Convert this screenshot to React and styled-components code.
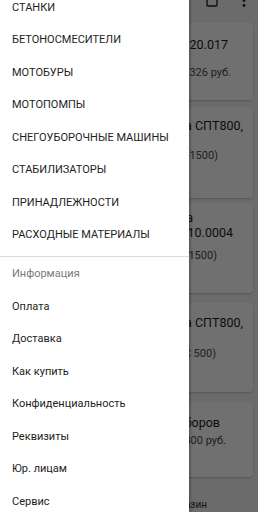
import styled, { createGlobalStyle } from "styled-components";

const Global = createGlobalStyle`
  html, body { margin: 0; padding: 0; }
  body { font-family: Roboto, "Noto Sans", sans-serif; }
`;

const catalog = [
  "СТАНКИ",
  "БЕТОНОСМЕСИТЕЛИ",
  "МОТОБУРЫ",
  "МОТОПОМПЫ",
  "СНЕГОУБОРОЧНЫЕ МАШИНЫ",
  "СТАБИЛИЗАТОРЫ",
  "ПРИНАДЛЕЖНОСТИ",
  "РАСХОДНЫЕ МАТЕРИАЛЫ",
];

const info = [
  "Оплата",
  "Доставка",
  "Как купить",
  "Конфиденциальность",
  "Реквизиты",
  "Юр. лицам",
  "Сервис",
];

// product cards behind the drawer (only their right ends show)
const cards = [
  { top: 6, height: 78, lines: [
    { text: "120.017", pr: 25, big: true, mt: 14.5 },
    { text: "14 326 руб.", pr: 22, mt: 14 },
  ] },
  { top: 7, height: 91, lines: [
    { text: "на СПТ800,", pr: 10, big: true, mt: 10.5 },
    { text: "(МЭС-1500)", pr: 35, mt: 16 },
  ] },
  { top: 5, height: 90, lines: [
    { text: "на", pr: 60, big: true, mt: 7 },
    { text: "10.0004", pr: 20, big: true, mt: 0 },
    { text: "(МЭС-1500)", pr: 36, mt: 8.5 },
  ] },
  { top: 9, height: 90, lines: [
    { text: "на СПТ800,", pr: 10, big: true, mt: 12.5 },
    { text: "(МЭС 500)", pr: 37, mt: 17 },
  ] },
  { top: 10, height: 75, lines: [
    { text: "приборов", pr: 33, big: true, mt: 12.5 },
    { text: "2 800 руб.", pr: 27, mt: 4 },
  ] },
];

export default function App() {
  return (
    <>
      <Global />
      <Screen>
        <AppArea>
          <TopBar>
            <svg width="12" height="8" viewBox="0 0 12 8">
              <rect x="1" y="-3" width="10" height="9" rx="1.2" fill="none" stroke="#222" strokeWidth="1.4" />
            </svg>
            <svg width="4" height="8" viewBox="0 0 4 8" style={{ marginLeft: 24 }}>
              <circle cx="2" cy="0.5" r="1.4" fill="#222" />
              <circle cx="2" cy="5.5" r="1.4" fill="#222" />
            </svg>
          </TopBar>
          {cards.map((c, i) => (
            <Card key={i} $top={c.top} $height={c.height}>
              {c.lines.map((l, j) => (
                <CardLine key={j} $pr={l.pr} $big={l.big} $mt={l.mt}>
                  {l.text}
                </CardLine>
              ))}
            </Card>
          ))}
          <BottomLabel>Магазин</BottomLabel>
        </AppArea>
        <Scrim />
        <Drawer>
          <Menu $first>
            {catalog.map((t) => (
              <Item key={t}>{t}</Item>
            ))}
          </Menu>
          <Divider />
          <SectionTitle>Информация</SectionTitle>
          <Menu>
            {info.map((t) => (
              <Item key={t}>{t}</Item>
            ))}
          </Menu>
        </Drawer>
      </Screen>
    </>
  );
}

const Screen = styled.div`
  position: relative;
  width: 258px;
  height: 512px;
  overflow: hidden;
  background: #f4f4f4;
`;

const AppArea = styled.div`
  display: flex;
  flex-direction: column;
  padding: 0 5px 0 8px;
`;

const TopBar = styled.div`
  height: 16px;
  flex-shrink: 0;
  display: flex;
  justify-content: flex-end;
  align-items: flex-start;
  padding-right: 7px;
`;

const Card = styled.div`
  margin-top: ${(p) => p.$top}px;
  height: ${(p) => p.$height}px;
  flex-shrink: 0;
  box-sizing: border-box;
  background: #fff;
  border-radius: 4px;
  box-shadow: 0 1px 2px rgba(0, 0, 0, 0.2);
  display: flex;
  flex-direction: column;
`;

const CardLine = styled.div`
  margin-top: ${(p) => p.$mt}px;
  padding-right: ${(p) => p.$pr}px;
  text-align: right;
  white-space: nowrap;
  font-size: ${(p) => (p.$big ? "12.5px" : "11px")};
  line-height: ${(p) => (p.$big ? "15px" : "13px")};
  color: ${(p) => (p.$big ? "#1c1c1c" : "#4a4a4a")};
`;

const BottomLabel = styled.div`
  margin-top: 22px;
  padding-right: 46px;
  text-align: right;
  font-size: 10px;
  line-height: 12px;
  color: #333;
`;

const Scrim = styled.div`
  position: absolute;
  inset: 0;
  background: rgba(0, 0, 0, 0.56);
`;

const Drawer = styled.div`
  position: absolute;
  top: 0;
  left: 0;
  bottom: 0;
  width: 189px;
  overflow: hidden;
  background: #fff;
  box-shadow: 1px 0 3px rgba(0, 0, 0, 0.35);
  display: flex;
  flex-direction: column;
`;

const Menu = styled.div`
  display: flex;
  flex-direction: column;
  flex-shrink: 0;
  margin-top: ${(p) => (p.$first ? "-9px" : "0")};
`;

const Item = styled.div`
  height: 32.5px;
  flex-shrink: 0;
  display: flex;
  align-items: center;
  padding-left: 12px;
  font-size: 11px;
  color: #1e1e1e;
  white-space: nowrap;
`;

const Divider = styled.div`
  height: 1px;
  flex-shrink: 0;
  margin-top: 5px;
  background: #dcdcdc;
`;

const SectionTitle = styled.div`
  height: 33px;
  flex-shrink: 0;
  display: flex;
  align-items: center;
  padding-left: 12px;
  font-size: 11px;
  color: #7a7a7a;
`;
